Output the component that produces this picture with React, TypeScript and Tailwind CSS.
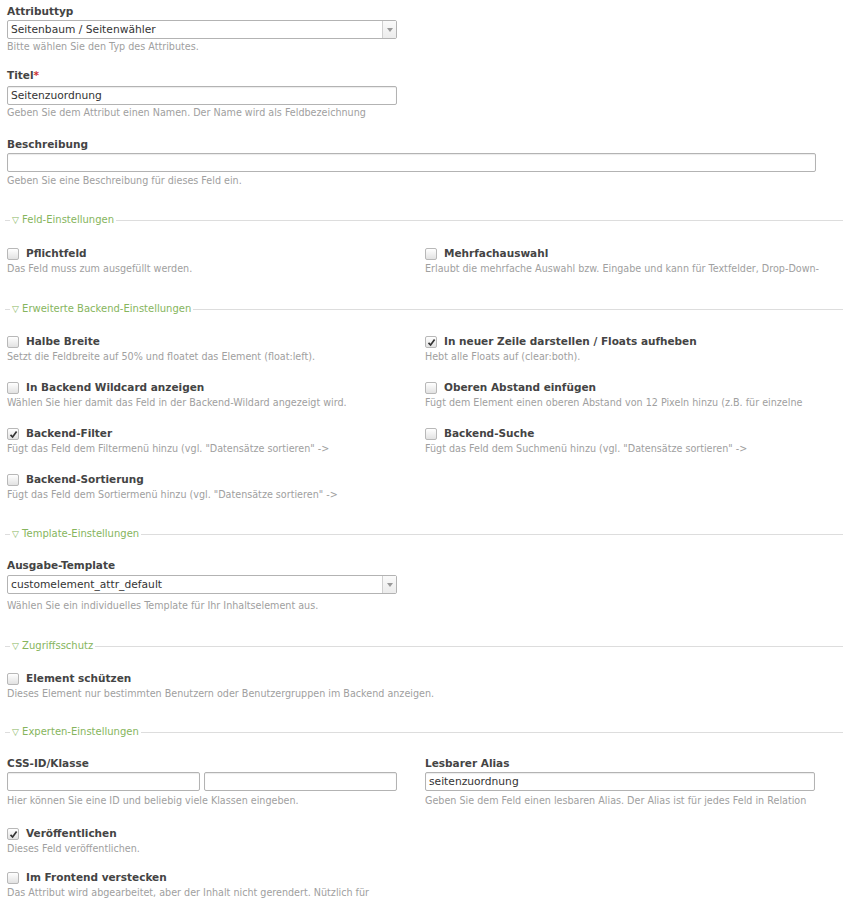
import React from 'react';

const font = { fontFamily: '"DejaVu Sans", Verdana, sans-serif' };

const Label: React.FC<{ text: string; required?: boolean }> = ({ text, required }) => (
  <div className="h-[14px] leading-[14px] text-[10.5px] font-bold text-[#444]">
    {text}
    {required && <span className="text-[#c33]">*</span>}
  </div>
);

const Help: React.FC<{ text: string }> = ({ text }) => (
  <div className="h-[13px] leading-[13px] text-[9.6px] text-[#a0a0a0] whitespace-nowrap overflow-hidden">{text}</div>
);

const TextInput: React.FC<{ value?: string; width: string }> = ({ value, width }) => (
  <div
    className={`${width} h-[19px] border border-[#b3b3b3] rounded-[2px] bg-white shadow-[inset_0_1px_1px_rgba(0,0,0,0.08)] px-[3px] text-[10.7px] leading-[17px] text-[#333]`}
  >
    {value}
  </div>
);

const Select: React.FC<{ value: string }> = ({ value }) => (
  <div className="w-[390px] h-[19px] border border-[#b3b3b3] rounded-[2px] bg-white flex">
    <div className="flex-1 px-[3px] text-[10.7px] leading-[17px] text-[#333]">{value}</div>
    <div className="w-[14px] border-l border-[#d0d0d0] bg-gradient-to-b from-[#fafafa] to-[#ececec] flex items-center justify-center">
      <svg width="6" height="4" viewBox="0 0 6 4">
        <path d="M0 0 L6 0 L3 4 Z" fill="#999" />
      </svg>
    </div>
  </div>
);

const Checkbox: React.FC<{ checked?: boolean }> = ({ checked }) => (
  <div className="w-[12px] h-[12px] border border-[#b8b8b8] rounded-[2px] bg-gradient-to-b from-white to-[#e2e2e2] flex items-center justify-center">
    {checked && (
      <svg width="9" height="9" viewBox="0 0 9 9">
        <path d="M1.5 4.8 L3.6 7 L7.6 1.6" fill="none" stroke="#333" strokeWidth="1.7" />
      </svg>
    )}
  </div>
);

const CheckField: React.FC<{ label: string; help: string; checked?: boolean }> = ({ label, help, checked }) => (
  <div>
    <div className="flex items-center h-[14px]">
      <Checkbox checked={checked} />
      <span className="ml-[7px] text-[10.5px] font-bold text-[#444]">{label}</span>
    </div>
    <div className="h-[14px] pt-[1px]">
      <Help text={help} />
    </div>
  </div>
);

const Legend: React.FC<{ title: string }> = ({ title }) => (
  <div className="flex items-center h-[14px] ml-[-2px] mr-[4px]">
    <span className="w-[5px] h-px bg-[#ddd]" />
    <span className="px-[2px] text-[10px] text-[#86b55d] whitespace-nowrap">
      <span className="text-[9px]">▽</span> {title}
    </span>
    <span className="flex-1 h-px bg-[#ddd]" />
  </div>
);

export default function App() {
  return (
    <div style={font} className="w-[854px] min-h-[900px] bg-white px-[7px] pt-[4px]">
      {/* Attributtyp */}
      <Label text="Attributtyp" />
      <div className="mt-[2px]">
        <Select value="Seitenbaum / Seitenwähler" />
      </div>
      <div className="mt-[1px]">
        <Help text="Bitte wählen Sie den Typ des Attributes." />
      </div>

      <div className="mt-[15px]">
        <Label text="Titel" required />
        <div className="mt-[4px]">
          <TextInput value="Seitenzuordnung" width="w-[390px]" />
        </div>
        <div className="mt-[1px]">
          <Help text="Geben Sie dem Attribut einen Namen. Der Name wird als Feldbezeichnung" />
        </div>
      </div>

      <div className="mt-[18px]">
        <Label text="Beschreibung" />
        <div className="mt-[2px]">
          <TextInput width="w-[809px]" />
        </div>
        <div className="mt-[2px]">
          <Help text="Geben Sie eine Beschreibung für dieses Feld ein." />
        </div>
      </div>

      <div className="mt-[26px]">
        <Legend title="Feld-Einstellungen" />
      </div>
      <div className="mt-[20px] grid grid-cols-[418px_1fr]">
        <CheckField label="Pflichtfeld" help="Das Feld muss zum ausgefüllt werden." />
        <CheckField
          label="Mehrfachauswahl"
          help="Erlaubt die mehrfache Auswahl bzw. Eingabe und kann für Textfelder, Drop-Down-"
        />
      </div>

      <div className="mt-[27px]">
        <Legend title="Erweiterte Backend-Einstellungen" />
      </div>
      <div className="mt-[19px] grid grid-cols-[418px_1fr] gap-y-[18px]">
        <CheckField label="Halbe Breite" help="Setzt die Feldbreite auf 50% und floatet das Element (float:left)." />
        <CheckField
          label="In neuer Zeile darstellen / Floats aufheben"
          help="Hebt alle Floats auf (clear:both)."
          checked
        />
        <CheckField
          label="In Backend Wildcard anzeigen"
          help="Wählen Sie hier damit das Feld in der Backend-Wildard angezeigt wird."
        />
        <CheckField
          label="Oberen Abstand einfügen"
          help="Fügt dem Element einen oberen Abstand von 12 Pixeln hinzu (z.B. für einzelne"
        />
        <CheckField
          label="Backend-Filter"
          help={'Fügt das Feld dem Filtermenü hinzu (vgl. "Datensätze sortieren" ->'}
          checked
        />
        <CheckField
          label="Backend-Suche"
          help={'Fügt das Feld dem Suchmenü hinzu (vgl. "Datensätze sortieren" ->'}
        />
        <CheckField
          label="Backend-Sortierung"
          help={'Fügt das Feld dem Sortiermenü hinzu (vgl. "Datensätze sortieren" ->'}
        />
      </div>

      <div className="mt-[26px]">
        <Legend title="Template-Einstellungen" />
      </div>
      <div className="mt-[17px]">
        <Label text="Ausgabe-Template" />
        <div className="mt-[3px]">
          <Select value="customelement_attr_default" />
        </div>
        <div className="mt-[5px]">
          <Help text="Wählen Sie ein individuelles Template für Ihr Inhaltselement aus." />
        </div>
      </div>

      <div className="mt-[27px]">
        <Legend title="Zugriffsschutz" />
      </div>
      <div className="mt-[19px]">
        <CheckField
          label="Element schützen"
          help="Dieses Element nur bestimmten Benutzern oder Benutzergruppen im Backend anzeigen."
        />
      </div>

      <div className="mt-[25px]">
        <Legend title="Experten-Einstellungen" />
      </div>
      <div className="mt-[17px] grid grid-cols-[418px_1fr]">
        <div>
          <Label text="CSS-ID/Klasse" />
          <div className="mt-[2px] flex gap-[4px]">
            <TextInput width="w-[193px]" />
            <TextInput width="w-[193px]" />
          </div>
          <div className="mt-[3px]">
            <Help text="Hier können Sie eine ID und beliebig viele Klassen eingeben." />
          </div>
        </div>
        <div>
          <Label text="Lesbarer Alias" />
          <div className="mt-[2px]">
            <TextInput value="seitenzuordnung" width="w-[390px]" />
          </div>
          <div className="mt-[3px]">
            <Help text="Geben Sie dem Feld einen lesbaren Alias. Der Alias ist für jedes Feld in Relation" />
          </div>
        </div>
      </div>

      <div className="mt-[20px]">
        <CheckField label="Veröffentlichen" help="Dieses Feld veröffentlichen." checked />
      </div>
      <div className="mt-[16px]">
        <CheckField
          label="Im Frontend verstecken"
          help="Das Attribut wird abgearbeitet, aber der Inhalt nicht gerendert. Nützlich für"
        />
      </div>
    </div>
  );
}
